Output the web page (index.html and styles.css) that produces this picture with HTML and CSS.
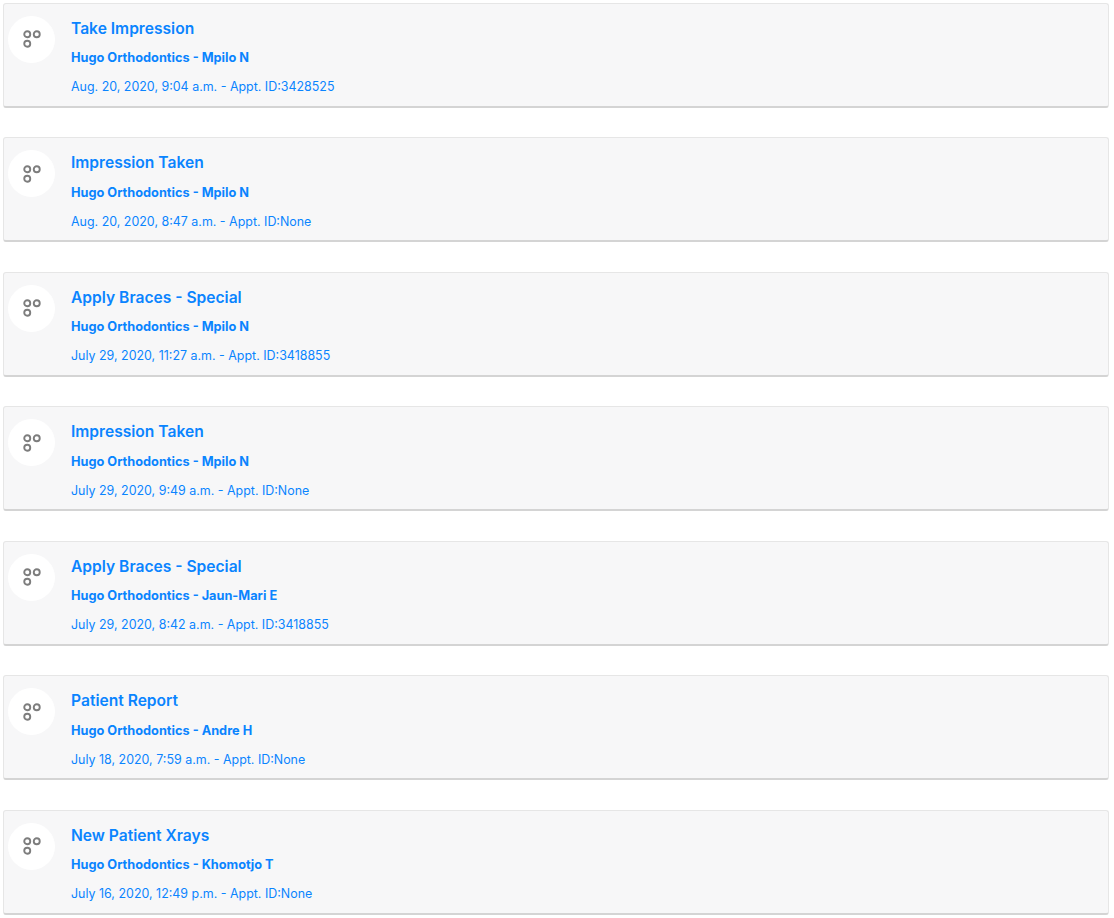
FILE: index.html
```html
<!DOCTYPE html>
<html lang="en">
<head>
<meta charset="utf-8">
<title>Timeline</title>
<link rel="stylesheet" href="styles.css">
</head>
<body>
<svg class="defs" width="0" height="0" aria-hidden="true">
  <symbol id="dots" viewBox="0 0 18 18">
    <circle cx="4.25" cy="4.25" r="3" />
    <circle cx="13.75" cy="4.25" r="3" />
    <circle cx="4.25" cy="13.75" r="3" />
  </symbol>
</svg>
<main class="list">
  <article class="card">
    <div class="avatar"><svg class="icon"><use href="#dots"/></svg></div>
    <div class="body">
      <h3 class="title">Take Impression</h3>
      <p class="sub">Hugo Orthodontics - Mpilo N</p>
      <p class="meta">Aug. 20, 2020, 9:04 a.m. - Appt. ID:3428525</p>
    </div>
  </article>
  <article class="card">
    <div class="avatar"><svg class="icon"><use href="#dots"/></svg></div>
    <div class="body">
      <h3 class="title">Impression Taken</h3>
      <p class="sub">Hugo Orthodontics - Mpilo N</p>
      <p class="meta">Aug. 20, 2020, 8:47 a.m. - Appt. ID:None</p>
    </div>
  </article>
  <article class="card">
    <div class="avatar"><svg class="icon"><use href="#dots"/></svg></div>
    <div class="body">
      <h3 class="title">Apply Braces - Special</h3>
      <p class="sub">Hugo Orthodontics - Mpilo N</p>
      <p class="meta">July 29, 2020, 11:27 a.m. - Appt. ID:3418855</p>
    </div>
  </article>
  <article class="card">
    <div class="avatar"><svg class="icon"><use href="#dots"/></svg></div>
    <div class="body">
      <h3 class="title">Impression Taken</h3>
      <p class="sub">Hugo Orthodontics - Mpilo N</p>
      <p class="meta">July 29, 2020, 9:49 a.m. - Appt. ID:None</p>
    </div>
  </article>
  <article class="card">
    <div class="avatar"><svg class="icon"><use href="#dots"/></svg></div>
    <div class="body">
      <h3 class="title">Apply Braces - Special</h3>
      <p class="sub">Hugo Orthodontics - Jaun-Mari E</p>
      <p class="meta">July 29, 2020, 8:42 a.m. - Appt. ID:3418855</p>
    </div>
  </article>
  <article class="card">
    <div class="avatar"><svg class="icon"><use href="#dots"/></svg></div>
    <div class="body">
      <h3 class="title">Patient Report</h3>
      <p class="sub">Hugo Orthodontics - Andre H</p>
      <p class="meta">July 18, 2020, 7:59 a.m. - Appt. ID:None</p>
    </div>
  </article>
  <article class="card">
    <div class="avatar"><svg class="icon"><use href="#dots"/></svg></div>
    <div class="body">
      <h3 class="title">New Patient Xrays</h3>
      <p class="sub">Hugo Orthodontics - Khomotjo T</p>
      <p class="meta">July 16, 2020, 12:49 p.m. - Appt. ID:None</p>
    </div>
  </article>
</main>
</body>
</html>
```
FILE: styles.css
```css
html, body { margin: 0; padding: 0; background: #fff; overflow: hidden; }
body { font-family: Inter, "Liberation Sans", sans-serif; color: #0a84ff; }
.defs { position: absolute; }
.list { display: flex; flex-direction: column; gap: 29.5px; padding: 2.5px 5px 0 3px; }
.card {
  display: flex;
  gap: 16px;
  height: 105px;
  box-sizing: border-box;
  padding: 12px 4px 0 4px;
  background: #f7f7f8;
  border: 1px solid #e6e6e6;
  border-bottom: 2px solid #d4d4d4;
  border-radius: 3px;
}
.avatar {
  flex: none;
  width: 47px;
  height: 47px;
  border-radius: 50%;
  background: #fff;
  display: flex;
  align-items: center;
  justify-content: center;
}
.icon { width: 18px; height: 18px; fill: none; stroke: #7d7d7d; stroke-width: 1.9; }
.body { display: flex; flex-direction: column; padding-top: 3.25px; }
.title { margin: 0; font-size: 15.6px; line-height: 20px; font-weight: 600; }
.sub { margin: 11.25px 0 0; font-size: 12.75px; line-height: 16px; font-weight: 700; }
.meta { margin: 13px 0 0; font-size: 12.45px; line-height: 16px; font-weight: 400; }
```
